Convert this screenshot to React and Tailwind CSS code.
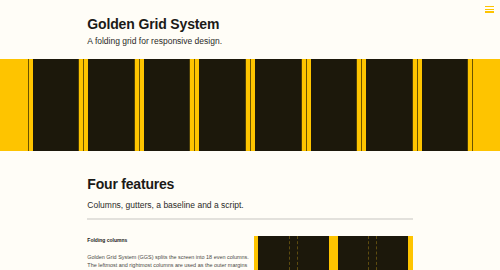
export default function App() {
  const cells = [0, 1, 2, 3, 4, 5, 6, 7];
  return (
    <div
      className="relative w-[500px] h-[270px] overflow-hidden bg-[#fffdf7] text-[#1b1a17]"
      style={{ fontFamily: '"Liberation Sans", Arial, sans-serif' }}
    >
      {/* hamburger */}
      <div className="absolute top-[5.7px] right-[6px] flex flex-col gap-[1.5px]">
        <div className="w-[9px] h-[1.4px] bg-[#fec400]" />
        <div className="w-[9px] h-[1.4px] bg-[#fec400]" />
        <div className="w-[9px] h-[1.4px] bg-[#fec400]" />
      </div>

      {/* header */}
      <header className="h-[59px] mx-auto w-[66.6667%] px-[4px] pt-[16px]">
        <h1 className="text-[14px] leading-[17px] font-bold tracking-[-0.15px]">
          Golden Grid System
        </h1>
        <p className="mt-[2.5px] text-[8.5px] leading-[10px] text-[#2b2a27]">
          A folding grid for responsive design.
        </p>
      </header>

      {/* band */}
      <div className="flex h-[92px] bg-[#fec400]">
        <div className="w-[5.5556%]" />
        {cells.map((i) => (
          <div key={i} className="flex-1 border-l border-[#6a5300] px-[4px]">
            <div className="h-full bg-[#1c180b] border-r border-[#4a3c08]" />
          </div>
        ))}
        <div className="w-[5.5556%] border-l border-[#6a5300]" />
      </div>

      {/* section */}
      <section className="mx-auto w-[66.6667%] px-[4px] pt-[25px]">
        <h2 className="text-[14px] leading-[17px] font-bold tracking-[-0.2px]">
          Four features
        </h2>
        <p className="mt-[6.5px] text-[8.5px] leading-[10px] text-[#2b2a27]">
          Columns, gutters, a baseline and a script.
        </p>
        <div className="mt-[8.5px] h-[1.6px] bg-[#e3e1dc]" />

        <div className="mt-[16.4px] grid grid-cols-2 gap-[8px] items-start">
          <div className="pt-[1px]">
            <h3 className="text-[5px] leading-[6px] font-bold">Folding columns</h3>
            <p className="mt-[9.7px] text-[5.45px] leading-[8.4px] text-[#4a4945] whitespace-nowrap">
              Golden Grid System (GGS) splits the screen into 18 even columns.
              <br />
              The leftmost and rightmost columns are used as the outer margins
            </p>
          </div>
          <div className="flex h-[60px] bg-[#fec400] px-[4.5px] gap-[8.5px]">
            {[0, 1].map((i) => (
              <div key={i} className="flex-1 flex bg-[#1c180b]">
                <div className="w-[30.5px]" />
                <div className="w-[8.4px] border-l border-dashed border-[#5e4c10]" />
                <div className="border-l border-dashed border-[#5e4c10]" />
              </div>
            ))}
          </div>
        </div>
      </section>
    </div>
  );
}
